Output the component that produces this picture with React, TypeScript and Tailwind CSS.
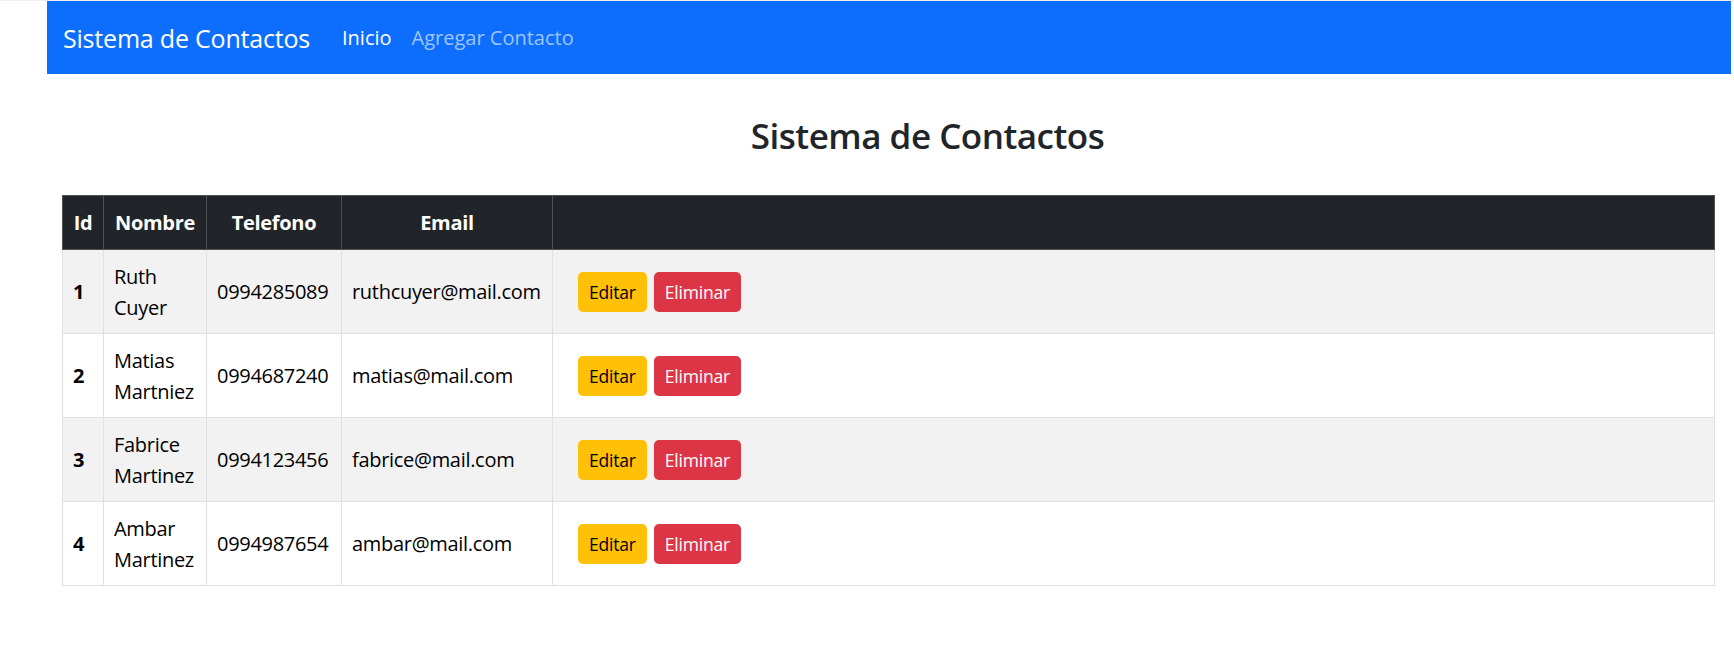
import React from "react";

const rows = [
  { id: 1, nombre: ["Ruth", "Cuyer"], tel: "0994285089", email: "ruthcuyer@mail.com" },
  { id: 2, nombre: ["Matias", "Martniez"], tel: "0994687240", email: "matias@mail.com" },
  { id: 3, nombre: ["Fabrice", "Martinez"], tel: "0994123456", email: "fabrice@mail.com" },
  { id: 4, nombre: ["Ambar", "Martinez"], tel: "0994987654", email: "ambar@mail.com" },
];

export default function App() {
  return (
    <div
      className="min-h-[651px] bg-white border-t border-[#efefef]"
      style={{ fontFamily: '"Open Sans", "Noto Sans", sans-serif' }}
    >
      <div className="ml-[47px] mr-[3px]">
        <nav className="h-[73px] bg-[#0d6efd] flex items-center pl-[16px]">
          <span className="text-[25px] text-white leading-[38px] mr-[22px] tracking-[-0.2px]">
            Sistema de Contactos
          </span>
          <span className="text-[20px] text-white px-[10px] leading-[30px]">Inicio</span>
          <span className="text-[20px] text-[#9ec5fe] px-[10px] leading-[30px]">
            Agregar Contacto
          </span>
        </nav>
        <main className="pl-[15px] pr-[16px]">
          <h3 className="text-center text-[35px] font-semibold text-[#212529] leading-[42px] mt-[41px] mb-[38px] pl-[78px] tracking-[-0.5px]">
            Sistema de Contactos
          </h3>
          <table className="w-full table-fixed border-collapse text-[20px] text-black tracking-[-0.3px]">
            <colgroup>
              <col className="w-[41px]" />
              <col className="w-[103px]" />
              <col className="w-[135px]" />
              <col className="w-[211px]" />
              <col />
            </colgroup>
            <thead>
              <tr className="h-[54px] bg-[#212529] text-white">
                <th className="border border-[#4d5154] font-bold text-center px-[6px]">Id</th>
                <th className="border border-[#4d5154] font-bold text-center px-[6px]">Nombre</th>
                <th className="border border-[#4d5154] font-bold text-center px-[6px]">Telefono</th>
                <th className="border border-[#4d5154] font-bold text-center px-[6px]">Email</th>
                <th className="border border-[#4d5154]"></th>
              </tr>
            </thead>
            <tbody>
              {rows.map((r, i) => (
                <tr key={r.id} className={`h-[84px] ${i % 2 === 0 ? "bg-[#f2f2f2]" : "bg-white"}`}>
                  <td className="border border-[#dee2e6] px-[10px] font-bold align-middle">{r.id}</td>
                  <td className="border border-[#dee2e6] px-[10px] align-middle leading-[31px]">
                    {r.nombre[0]}
                    <br />
                    {r.nombre[1]}
                  </td>
                  <td className="border border-[#dee2e6] px-[10px] align-middle">{r.tel}</td>
                  <td className="border border-[#dee2e6] px-[10px] align-middle">{r.email}</td>
                  <td className="border border-[#dee2e6] pl-[25px] align-middle">
                    <div className="flex gap-[7px]">
                      <button className="h-[40px] px-[11px] rounded-[5px] bg-[#ffc107] text-black text-[17.5px] leading-[26px] tracking-[-0.2px]">
                        Editar
                      </button>
                      <button className="h-[40px] px-[11px] rounded-[5px] bg-[#dc3545] text-white text-[17.5px] leading-[26px] tracking-[-0.2px]">
                        Eliminar
                      </button>
                    </div>
                  </td>
                </tr>
              ))}
            </tbody>
          </table>
        </main>
      </div>
    </div>
  );
}
